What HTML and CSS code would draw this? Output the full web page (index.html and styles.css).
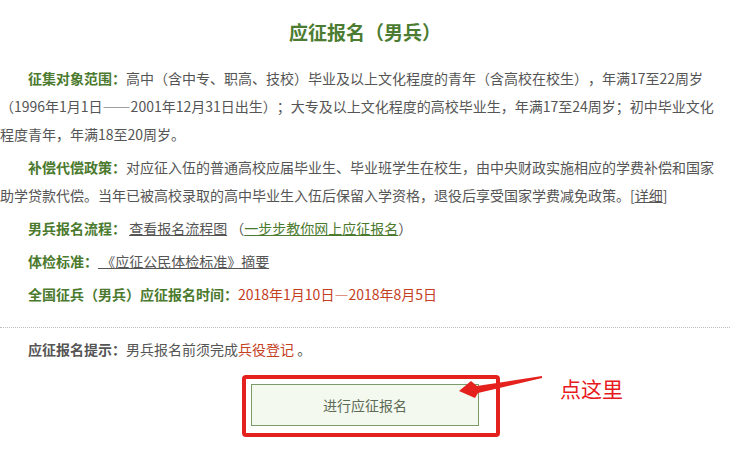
FILE: index.html
```html
<!DOCTYPE html>
<html lang="zh-CN">
<head>
<meta charset="utf-8">
<title>应征报名（男兵）</title>
<link rel="stylesheet" href="styles.css">
</head>
<body>
<div class="page">
  <h1 class="title">应征报名（男兵）</h1>
  <p class="para indent"><span class="label">征集对象范围：</span>高中（含中专、职高、技校）毕业及以上文化程度的青年（含高校在校生），年满17至22周岁（1996年1月1日——2001年12月31日出生）；大专及以上文化程度的高校毕业生，年满17至24周岁；初中毕业文化程度青年，年满18至20周岁。</p>
  <p class="para indent"><span class="label">补偿代偿政策：</span>对应征入伍的普通高校应届毕业生、毕业班学生在校生，由中央财政实施相应的学费补偿和国家助学贷款代偿。当年已被高校录取的高中毕业生入伍后保留入学资格，退役后享受国家学费减免政策。[<a class="link" href="#">详细</a>]</p>
  <p class="para indent"><span class="label">男兵报名流程：</span> <a class="link" href="#">查看报名流程图</a> （<a class="link green" href="#">一步步教你网上应征报名</a>）</p>
  <p class="para indent"><span class="label">体检标准：</span><a class="link" href="#"> 《应征公民体检标准》摘要</a></p>
  <p class="para indent"><span class="label">全国征兵（男兵）应征报名时间：</span><span class="red">2018年1月10日—2018年8月5日</span></p>
  <div class="tips">
    <p class="para indent"><span class="label dark">应征报名提示：</span>男兵报名前须完成<span class="red">兵役登记</span> 。</p>
    <div class="action">
      <div class="btn-wrap">
        <a class="btn" href="#">进行应征报名</a>
        <div class="highlight"></div>
        <svg class="arrow" width="100" height="30" viewBox="0 0 100 30">
          <polygon points="8,19 20,9 26,14 91,4 91,6 27,21 24,26" fill="#e5211d"/>
        </svg>
        <span class="callout">点这里</span>
      </div>
    </div>
  </div>
</div>
</body>
</html>
```
FILE: styles.css
```css
html, body {
  margin: 0;
  padding: 0;
  background: #fff;
}
.page {
  width: 730px;
  min-height: 472px;
  font-family: "Noto Sans CJK SC", "Microsoft YaHei", sans-serif;
  font-size: 14px;
  color: #555;
  text-spacing-trim: space-all;
}
.title {
  margin: 17px 0 17px;
  font-size: 19px;
  line-height: 30px;
  font-weight: bold;
  text-align: center;
  color: #4b7c31;
}
.para {
  width: 714px;
  margin: 0 0 5px;
  line-height: 28px;
}
.indent {
  text-indent: 28px;
}
.label {
  font-weight: bold;
  color: #4b7a2e;
}
.label.dark {
  color: #555;
}
.link {
  color: #555;
  text-decoration: underline;
}
.link.green {
  color: #4b7a2e;
}
.red {
  color: #c4401f;
}
.tips {
  margin-top: 19px;
  border-top: 1px dotted #bdbdbd;
  padding-top: 7px;
}
.action {
  display: flex;
  justify-content: center;
  padding-top: 16px;
}
.btn-wrap {
  position: relative;
}
.btn {
  display: block;
  width: 226px;
  height: 40px;
  line-height: 40px;
  text-align: center;
  background: #f4f9f0;
  border: 1px solid #7b9c6a;
  color: #5d6b57;
  text-decoration: none;
  font-size: 14px;
}
.highlight {
  position: absolute;
  left: -9px;
  top: -9px;
  width: 250px;
  height: 54px;
  border: 4px solid #e5211d;
  border-radius: 4px;
}
.arrow {
  position: absolute;
  left: 200px;
  top: -12px;
}
.callout {
  position: absolute;
  left: 309px;
  top: -10px;
  font-size: 21px;
  line-height: 28px;
  color: #e8191c;
  white-space: nowrap;
}
```
